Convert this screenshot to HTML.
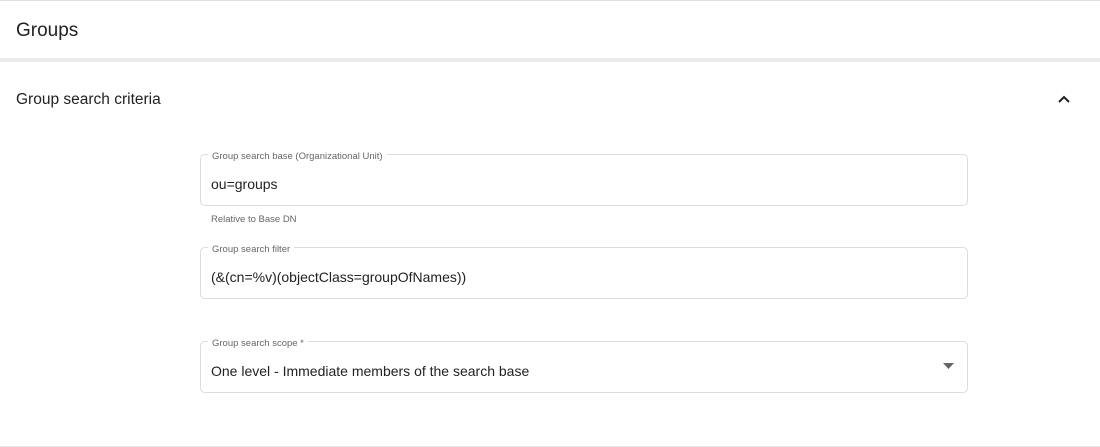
<!DOCTYPE html><html><head><style>
body{margin:0;width:1100px;height:447px;background:#fff;font-family:"Liberation Sans",sans-serif;color:#222;position:relative;overflow:hidden}
.a{position:absolute}
.f{position:absolute;left:200px;width:766px;border:1px solid #dcdcdc;border-radius:5px;height:50px}
.f .l{position:absolute;left:7px;top:-4px;background:#fff;padding:0 4px;font-size:9.5px;color:#666;line-height:11px}
.f .v{position:absolute;left:10px;top:21px;font-size:14px;color:#222}
</style></head><body>
<div class="a" style="left:0;top:0;width:1100px;height:1px;background:#e0e0e0"></div>
<div class="a" style="left:16px;top:20px;font-size:19px">Groups</div>
<div class="a" style="left:0;top:58px;width:1100px;height:4px;background:#ebebeb"></div>
<div class="a" style="left:16px;top:91px;font-size:15.5px">Group search criteria</div>
<svg class="a" style="left:1057px;top:94px" width="14" height="10"><path d="M2 8L7 3L12 8" stroke="#222" stroke-width="2" fill="none"/></svg>
<div class="f" style="top:154px"><div class="l">Group search base (Organizational Unit)</div><div class="v">ou=groups</div></div>
<div class="a" style="left:211px;top:214px;font-size:9.5px;color:#666">Relative to Base DN</div>
<div class="f" style="top:247px"><div class="l">Group search filter</div><div class="v">(&amp;(cn=%v)(objectClass=groupOfNames))</div></div>
<div class="f" style="top:341px"><div class="l">Group search scope *</div><div class="v">One level - Immediate members of the search base</div>
<svg class="a" style="left:742px;top:21px" width="12" height="7"><path d="M0 0H11L5.5 6Z" fill="#666"/></svg></div>
<div class="a" style="left:0;top:446px;width:1100px;height:1px;background:#e6e6e6"></div>
</body></html>
